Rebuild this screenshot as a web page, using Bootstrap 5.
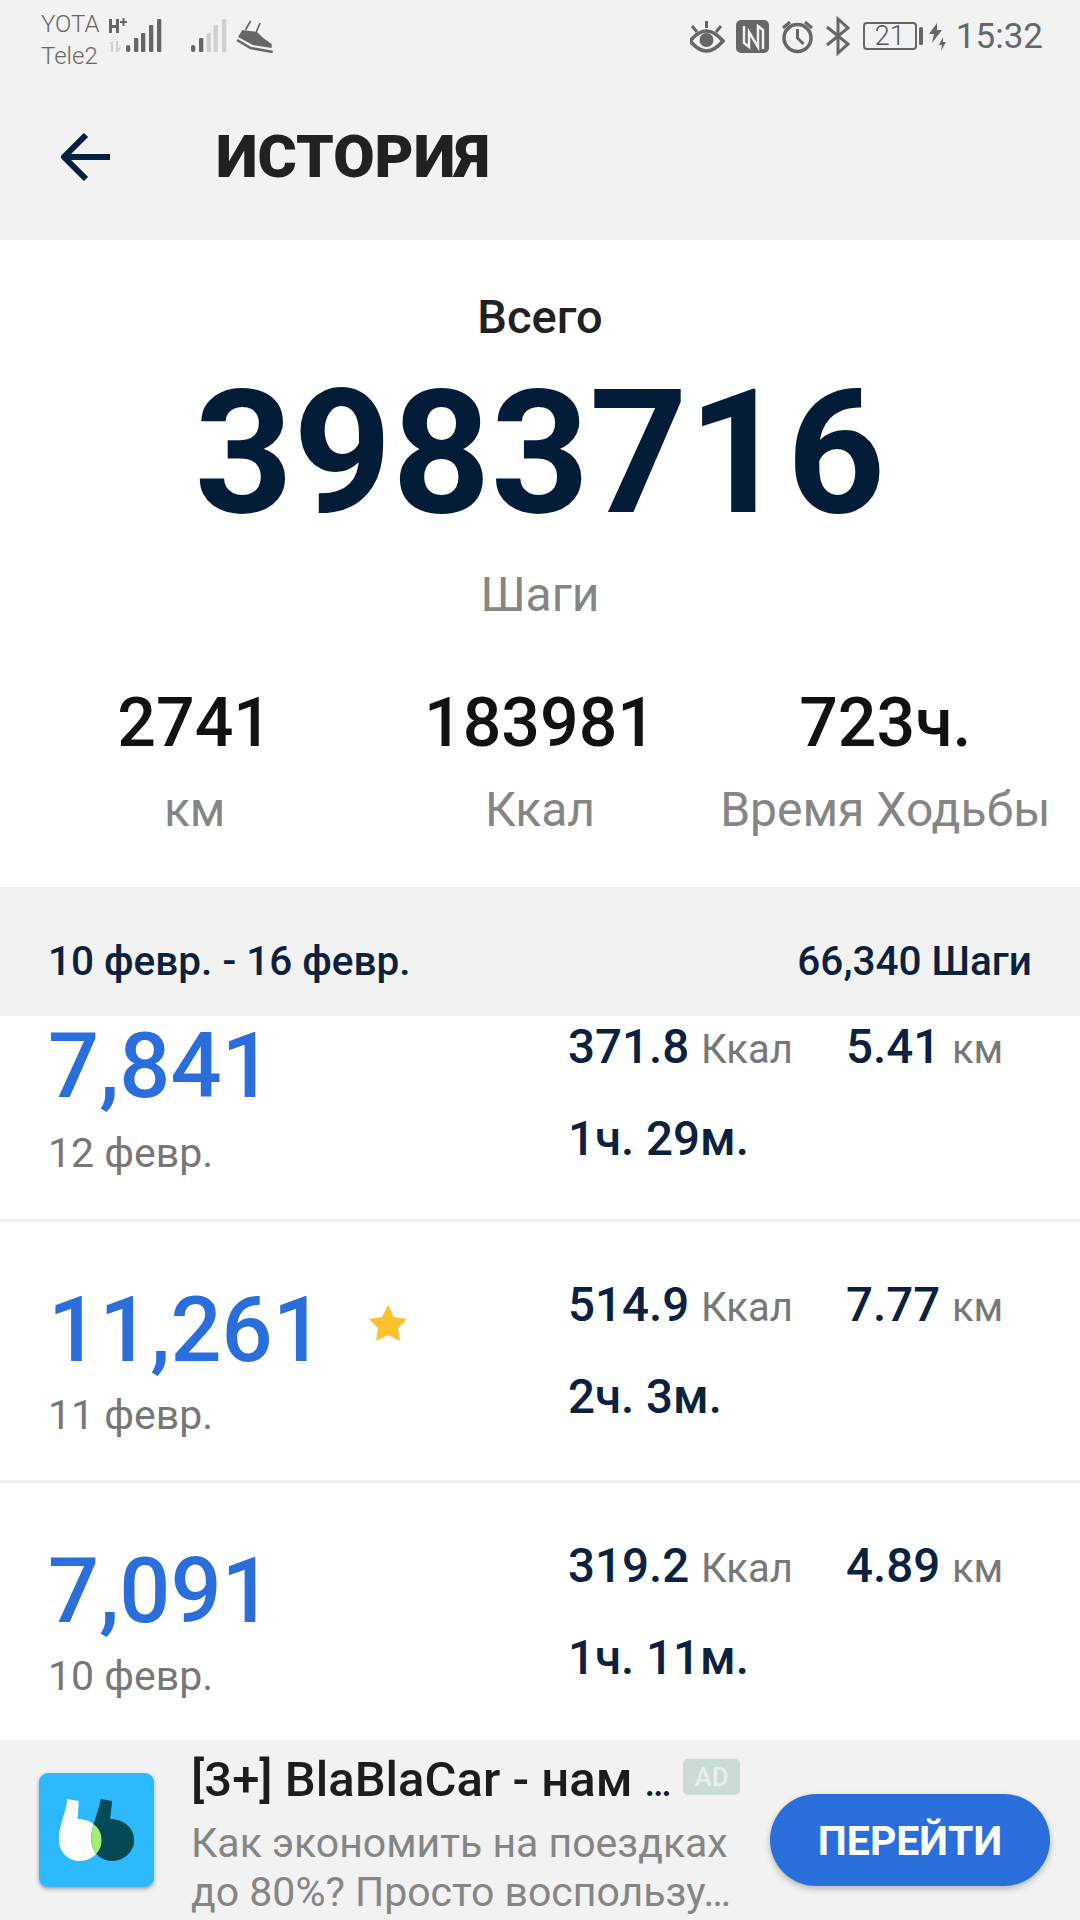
<!DOCTYPE html>
<html lang="ru">
<head>
<meta charset="utf-8">
<title>История</title>
<link href="https://cdn.jsdelivr.net/npm/bootstrap@5.3.0/dist/css/bootstrap.min.css" rel="stylesheet">
<style>
html,body{margin:0;background:#fff}
body{width:1080px;height:1920px;overflow:hidden;font-family:Roboto,"Noto Sans",sans-serif;color:#212121}
.app-frame{height:1920px}
.status-strip{height:80px;background:#f2f2f2;color:#666;padding:12px 37px 0 41px}
.carrier-names{font-size:24px;line-height:32px;width:67px;margin-top:-4px;font-weight:300}
.status-clock{font-size:35px;line-height:50px;color:#666;margin-left:7px}
.bat-box{width:54px;height:28px;border:2px solid #666;border-radius:4px;font-size:27px;font-weight:300;line-height:24px;text-align:center;color:#555;margin-top:10px}
.top-head{height:160px;background:#f2f2f2;padding:0 0 6px 61px}
.top-title{font-size:60px;font-weight:900;margin:0 0 0 105px;color:#212121;line-height:1}
.sum-block{height:647px;background:#fff;text-align:center}
.sum-cap{font-size:47px;font-weight:500;line-height:50px;padding-top:52px;color:#212121;box-sizing:content-box}
.sum-big{font-size:172px;font-weight:700;line-height:1;color:#031c38;margin-top:25px}
.sum-unit{font-size:48px;line-height:54px;color:#858585;margin-top:29px}
.sum-stats{padding:0 22px;margin-top:64px}
.stat-val{font-size:68px;font-weight:500;line-height:74px;color:#111}
.stat-lab{font-size:48px;line-height:54px;color:#858585;margin-top:23px;white-space:nowrap}
.week-bar{height:129px;background:#f2f2f2;padding:44px 48px 0 48px;font-size:40.5px;font-weight:500;color:#0a2240}
.day-list{height:724px;background:#fff}
.day-row{height:261px;padding:55px 0 0 48px;border-bottom:3px solid #f0f0f0}
.day-row.cut-row{height:206px;padding-top:3px}
.day-row.tail-row{height:257px;border-bottom:0}
.day-left{width:520px}
.day-num{font-size:90px;font-weight:500;line-height:108px;color:#2a6edb}
.day-date{font-size:41px;line-height:48px;color:#777;margin-top:6px}
.cut-row .day-num{line-height:96px}
.cut-row .day-date{margin-top:14px}
.day-star{margin-left:44px;margin-bottom:16px}
.met-right{padding-top:2px}
.met-line{font-size:47.5px;font-weight:500;line-height:52px;color:#0a2240;white-space:nowrap}
.met-line small{font-size:40px;font-weight:400;color:#777;margin-left:0}
.met-a{width:278px}
.met-two{margin-top:37px}
.ad-bar{height:180px;background:#f2f2f2;position:relative;padding:0 47px 0 39px}
.ad-ico{width:115px;height:114px;border-radius:9px;background:#2db9fd;box-shadow:0 2px 4px rgba(0,0,0,.35);flex:none;margin-top:33px}
.ad-text{margin-left:37px;width:540px;padding-top:14px}
.ad-title{font-size:49px;font-weight:500;line-height:52px;color:#1c1c1c;white-space:nowrap}
.ad-ell{font-size:38px}
.ad-desc{font-size:41px;line-height:49px;color:#858585;white-space:nowrap}
.ad-desc-first{margin-top:10px}
.ad-tag{position:absolute;left:683px;top:19px;width:57px;height:36px;background:#cbdcd4;border-radius:5px;color:#e7f1ec;font-size:26px;font-weight:500;line-height:36px;text-align:center}
.go-btn{position:absolute;left:770px;top:54px;width:280px;height:92px;border-radius:46px;background:#2a6edb;color:#fff;font-size:41px;font-weight:700;border:0;padding:3px 0 0;box-shadow:0 3px 6px rgba(0,0,0,.25)}
.go-btn:hover{background:#2a6edb;color:#fff}
</style>
</head>
<body>
<div class="app-frame d-flex flex-column">
  <div class="status-strip d-flex justify-content-between">
    <div class="d-flex">
      <div class="carrier-names"><div>YOTA</div><div>Tele2</div></div>
      <svg width="170" height="44" viewBox="0 0 170 44">
        <g fill="#666">
          <path d="M1 7h3v6h4V7h3v14H8v-5H4v5H1zM12 9h2.500V6h2v3H19v2h-2.500v3h-2v-3H12z"/>
          <rect x="18" y="33" width="4.300" height="7" rx="2"/><rect x="26" y="26" width="4.300" height="14" rx="1"/><rect x="33" y="21" width="4.300" height="19" rx="1"/><rect x="41" y="13" width="4.300" height="27" rx="1"/><rect x="49" y="7" width="4.300" height="33" rx="1"/>
          <rect x="83" y="33" width="4.300" height="7" rx="2"/><rect x="91" y="26" width="4.300" height="14" rx="1"/>
        </g>
        <g fill="#cfcfcf">
          <path d="M1 32l4-3v11H3V32zM8 29h2v7l4-2-4 6H8z"/>
          <rect x="98.600" y="21" width="4.300" height="19" rx="1"/><rect x="105.500" y="13" width="4.300" height="27" rx="1"/><rect x="114" y="7" width="4.300" height="33" rx="1"/>
        </g>
        <g transform="translate(129 0) scale(1.05 1) translate(-125 0)">
          <path fill="none" stroke="#666" stroke-width="1.600" d="M133 18l5-9M143 21l4-10"/>
          <path fill="#666" d="M126 25l4-7 14 2 6 6 8 6v4l-18-3z"/>
          <path fill="none" stroke="#666" stroke-width="2.500" d="M125 28l13 8 21 4"/>
        </g>
      </svg>
    </div>
    <div class="d-flex align-items-start">
      <svg width="173" height="44" viewBox="0 0 173 44">
        <path d="M0 29c6-7 11-10 16.500-10S27 22 33 29c-6 7-11 10-16.500 10S6 36 0 29z" fill="none" stroke="#666" stroke-width="3.500"/>
        <path d="M2 14l5 6M16.500 9v7M31 14l-5 6" fill="none" stroke="#666" stroke-width="3"/>
        <circle cx="16.500" cy="28" r="7" fill="#666"/>
        <rect x="46" y="8" width="33" height="33" rx="5" fill="#666"/>
        <path d="M54 14v17l5 4V20l9 15V14l5 4v19" fill="none" stroke="#f2f2f2" stroke-width="2.500"/>
        <g fill="none" stroke="#666" stroke-width="3.500">
          <circle cx="107.500" cy="26" r="13.500"/><path d="M107.500 17v9l6 6" stroke-width="3"/>
          <path d="M93 16l7-6M122 16l-7-6" stroke-width="3"/>
        </g>
        <path d="M137 15l21 17-10 9V7l10 9-21 17" fill="none" stroke="#666" stroke-width="3"/>
      </svg>
      <div class="bat-box">21</div>
      <svg width="32" height="44" viewBox="0 0 32 44">
        <rect x="2" y="15" width="4" height="18" rx="1.500" fill="#666"/>
        <path d="M20 11l-8 11h5l-2 9 10-13h-5z" fill="#666"/><path d="M26 25l-4 8h3l-1 6 5-9h-3z" fill="#666"/>
      </svg>
      <div class="status-clock">15:32</div>
    </div>
  </div>

  <div class="top-head d-flex align-items-center">
    <svg width="50" height="48" viewBox="0 0 50 48"><path d="M49 24H5M25 2L3 24l22 22" fill="none" stroke="#06203f" stroke-width="6"/></svg>
    <h1 class="top-title">ИСТОРИЯ</h1>
  </div>

  <div class="sum-block">
    <div class="sum-cap">Всего</div>
    <div class="sum-big">3983716</div>
    <div class="sum-unit">Шаги</div>
    <div class="row g-0 sum-stats">
      <div class="col-4"><div class="stat-val">2741</div><div class="stat-lab">км</div></div>
      <div class="col-4"><div class="stat-val">183981</div><div class="stat-lab">Ккал</div></div>
      <div class="col-4"><div class="stat-val">723ч.</div><div class="stat-lab">Время Ходьбы</div></div>
    </div>
  </div>

  <div class="week-bar d-flex justify-content-between">
    <span>10 февр. - 16 февр.</span><span>66,340 Шаги</span>
  </div>

  <div class="day-list">
    <div class="day-row cut-row d-flex">
      <div class="day-left"><div class="day-num">7,841</div><div class="day-date">12 февр.</div></div>
      <div class="met-right">
        <div class="d-flex met-line"><div class="met-a">371.8 <small>Ккал</small></div><div>5.41 <small>км</small></div></div>
        <div class="met-line met-two">1ч. 29м.</div>
      </div>
    </div>
    <div class="day-row d-flex">
      <div class="day-left"><div class="d-flex align-items-center"><div class="day-num">11,261</div>
        <svg class="day-star" width="40" height="38" viewBox="0 0 40 38"><path d="M20 1l6 12 13 2-9 9 2 13-12-6-12 6 2-13-9-9 13-2z" fill="#fdc02f"/></svg></div>
        <div class="day-date">11 февр.</div></div>
      <div class="met-right">
        <div class="d-flex met-line"><div class="met-a">514.9 <small>Ккал</small></div><div>7.77 <small>км</small></div></div>
        <div class="met-line met-two">2ч. 3м.</div>
      </div>
    </div>
    <div class="day-row tail-row d-flex">
      <div class="day-left"><div class="day-num">7,091</div><div class="day-date">10 февр.</div></div>
      <div class="met-right">
        <div class="d-flex met-line"><div class="met-a">319.2 <small>Ккал</small></div><div>4.89 <small>км</small></div></div>
        <div class="met-line met-two">1ч. 11м.</div>
      </div>
    </div>
  </div>

  <div class="ad-bar d-flex">
    <div class="ad-ico">
      <svg width="115" height="114" viewBox="0 0 110 114" preserveAspectRatio="none">
        <defs><clipPath id="white-drop"><path d="M27 26L38 28L37 46C50 46 60 55 60 67C60 79 50 88 39 88C27 88 19 78 19 66C19 52 26 40 27 26Z"/></clipPath></defs>
        <path d="M27 26L38 28L37 46C50 46 60 55 60 67C60 79 50 88 39 88C27 88 19 78 19 66C19 52 26 40 27 26Z" fill="#fff"/>
        <path d="M59 26L70 28L68 46C81 46 91 55 91 67C91 79 81 88 70 88C58 88 50 78 50 66C50 52 57 40 59 26Z" fill="#054a55"/>
        <path clip-path="url(#white-drop)" d="M59 26L70 28L68 46C81 46 91 55 91 67C91 79 81 88 70 88C58 88 50 78 50 66C50 52 57 40 59 26Z" fill="#a4ec74"/>
      </svg>
    </div>
    <div class="ad-text">
      <div class="ad-title">[3+] BlaBlaCar - нам <span class="ad-ell">…</span></div>
      <div class="ad-desc ad-desc-first">Как экономить на поездках</div>
      <div class="ad-desc">до 80%? Просто воспользу…</div>
    </div>
    <span class="ad-tag">AD</span>
    <button class="btn go-btn" type="button">ПЕРЕЙТИ</button>
  </div>
</div>
</body>
</html>
